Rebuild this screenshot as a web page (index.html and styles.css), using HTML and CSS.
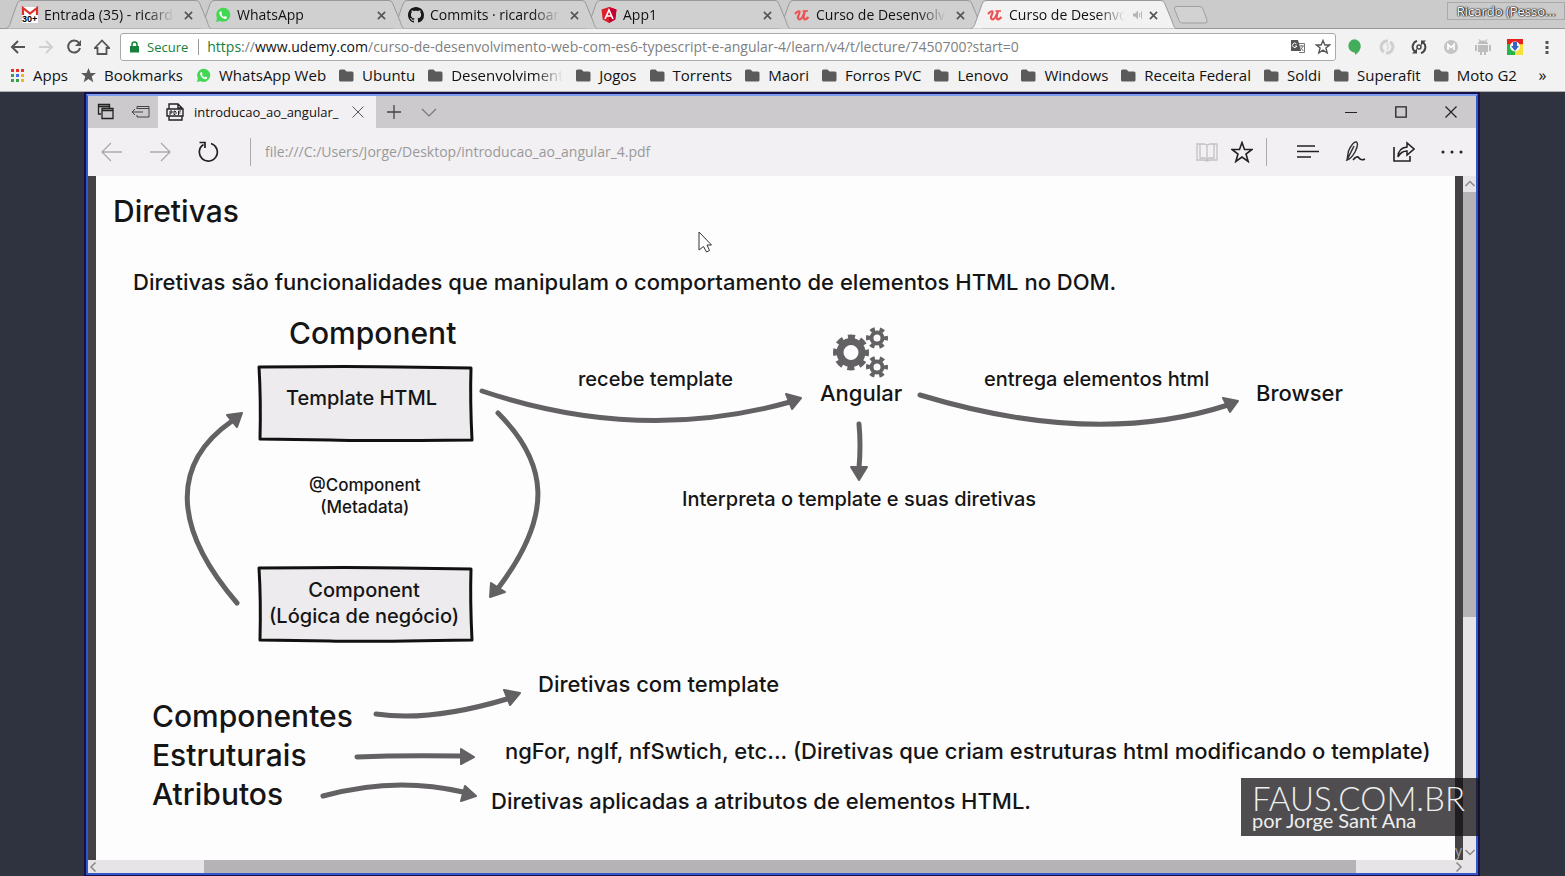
FILE: index.html
```html
<!DOCTYPE html>
<html lang="pt-BR">
<head>
<meta charset="utf-8">
<title>Curso de Desenvolvimento Web</title>
<link rel="stylesheet" href="styles.css">
</head>
<body>
<svg class="defs" aria-hidden="true">
  <symbol id="tab" viewBox="0 0 205 29" preserveAspectRatio="none"><path d="M0 28.5C3 28 4 24 5 21L11 4Q12 .5 15 .5H190Q193 .5 194 4L201 21C202 24 203 28 205 28.500"/></symbol>
  <symbol id="x" viewBox="0 0 10 10"><path d="M1 1L9 9M9 1L1 9" fill="none" stroke="#555" stroke-width="1.800"/></symbol>
  <symbol id="folder" viewBox="0 0 15 13"><path d="M0 2Q0 .5 1.500 .5H5.500L7.500 2.500H13Q14.500 2.500 14.500 4V11Q14.500 12.500 13 12.500H1.500Q0 12.500 0 11Z" fill="#5a5a5a"/></symbol>
  <symbol id="wa" viewBox="0 0 16 16"><path d="M1 15L2 11A7 7 0 1 1 5 14Z" fill="#43d854"/><path d="M5 4.500C3.500 6 5 8.500 6.500 10S10 12.500 11.500 11.500L12 10L10 9L9 10C8 9.500 6.800 8.500 6.300 7.300L7 6.400L6.300 4.400Z" fill="#fff"/></symbol>
  <symbol id="udemy" viewBox="0 0 16 16"><path d="M1 7Q4 3.500 5.500 4.500Q6 5.500 4.500 8.500T5.500 12.500Q8 12.500 11 4Q8.500 12 10.500 12.500Q12.500 12.500 14.500 10" fill="none" stroke="#ec5252" stroke-width="2.200"/><path d="M8.500 4H14" stroke="#ec5252" stroke-width="1.600"/></symbol>
</svg>

<header class="chrome">
  <nav class="tabs" aria-label="Abas">
    <div class="tab tab-1"><svg class="shape"><use href="#tab"/></svg>
      <svg class="fav" viewBox="0 0 16 16"><path d="M0 0H16V16H0Z" fill="#fff"/><path d="M1 8V1L8 6.500L15 1V8" fill="none" stroke="#dc3128" stroke-width="2.200"/><text x="0" y="15" class="badge">30+</text></svg>
      <span class="tab-title">Entrada (35) - ricardoar</span><button class="close" aria-label="Fechar"><svg><use href="#x"/></svg></button></div>
    <div class="tab tab-2"><svg class="shape"><use href="#tab"/></svg>
      <svg class="fav"><use href="#wa"/></svg>
      <span class="tab-title">WhatsApp</span><button class="close" aria-label="Fechar"><svg><use href="#x"/></svg></button></div>
    <div class="tab tab-3"><svg class="shape"><use href="#tab"/></svg>
      <svg class="fav" viewBox="0 0 16 16"><path fill="#191717" d="M8 0C3.580 0 0 3.580 0 8c0 3.540 2.290 6.530 5.470 7.590.4.070.55-.17.55-.38 0-.19-.01-.82-.01-1.490-2.010.37-2.530-.49-2.690-.94-.09-.23-.48-.94-.82-1.130-.28-.15-.68-.52-.01-.53.63-.01 1.080.58 1.230.82.72 1.210 1.870.87 2.330.66.070-.52.28-.87.51-1.070-1.780-.2-3.640-.89-3.640-3.950 0-.87.31-1.590.82-2.150-.08-.2-.36-1.020.08-2.120 0 0 .67-.21 2.200.82.64-.18 1.320-.27 2-.27s1.360.09 2 .27c1.530-1.040 2.200-.82 2.200-.82.44 1.100.16 1.920.08 2.120.51.56.82 1.270.82 2.150 0 3.070-1.870 3.750-3.650 3.950.29.25.54.73.54 1.480 0 1.070-.01 1.930-.01 2.200 0 .21.15.46.55.38A8.010 8.010 0 0 0 16 8c0-4.420-3.580-8-8-8z"/></svg>
      <span class="tab-title">Commits · ricardoarruda</span><button class="close" aria-label="Fechar"><svg><use href="#x"/></svg></button></div>
    <div class="tab tab-4"><svg class="shape"><use href="#tab"/></svg>
      <svg class="fav" viewBox="0 0 16 16"><path d="M8 0L15.500 2.600L14.300 12.500L8 16L1.700 12.500L.5 2.600Z" fill="#dd1f2d"/><path d="M8 0L15.500 2.600L14.300 12.500L8 16Z" fill="#c3002f"/><path d="M4 12L8 3L12 12M5.500 9H10.500" fill="none" stroke="#fff" stroke-width="1.600"/></svg>
      <span class="tab-title">App1</span><button class="close" aria-label="Fechar"><svg><use href="#x"/></svg></button></div>
    <div class="tab tab-5"><svg class="shape"><use href="#tab"/></svg>
      <svg class="fav"><use href="#udemy"/></svg>
      <span class="tab-title">Curso de Desenvolvimento</span><button class="close" aria-label="Fechar"><svg><use href="#x"/></svg></button></div>
    <div class="tab tab-active"><svg class="shape"><use href="#tab"/></svg>
      <svg class="fav"><use href="#udemy"/></svg>
      <span class="tab-title">Curso de Desenvolvimento</span>
      <svg class="sound" viewBox="0 0 10 10"><path d="M0 3.500H2L5 .5V9.500L2 6.500H0Z" fill="#b5b5b5"/><path d="M6.500 3V7M8.500 1.500V8.500" stroke="#b5b5b5" fill="none"/></svg>
      <button class="close" aria-label="Fechar"><svg><use href="#x"/></svg></button></div>
    <button class="new-tab" aria-label="Nova aba"><svg viewBox="0 0 36 18"><path d="M3 .5H27Q29 .5 30 3L34 14Q35 17 32 17H9Q7 17 6 14.500L1.500 3Q1 .5 3 .5Z" fill="#d2d2d2" stroke="#a0a0a0"/></svg></button>
    <button class="profile">Ricardo (Pesso...</button>
  </nav>

  <div class="toolbar">
    <button class="tool" aria-label="Voltar"><svg viewBox="0 0 16 16"><path d="M15 8H2M8 2L2 8L8 14" fill="none" stroke="#555" stroke-width="2"/></svg></button>
    <button class="tool" aria-label="Avançar"><svg viewBox="0 0 16 16"><path d="M1 8H14M8 2L14 8L8 14" fill="none" stroke="#d0d0d0" stroke-width="2"/></svg></button>
    <button class="tool" aria-label="Recarregar"><svg viewBox="0 0 16 16"><path d="M13 4A6 6 0 1 0 14 9" fill="none" stroke="#555" stroke-width="2"/><path d="M15 1V7H9Z" fill="#555"/></svg></button>
    <button class="tool" aria-label="Página inicial"><svg viewBox="0 0 16 16"><path d="M.8 9L8 1.500L15.200 9H12.500V15H3.500V9Z" fill="none" stroke="#555" stroke-width="1.800"/></svg></button>
    <div class="omnibox">
      <svg class="lock" viewBox="0 0 9 12"><path d="M2 6V3.500Q2 1 4.500 1T7 3.500V6" fill="none" stroke="#16803c" stroke-width="1.500"/><path d="M0 5H9V11.500H0Z" fill="#16803c"/></svg>
      <span class="secure">Secure</span>
      <div class="url" role="textbox" contenteditable="true" spellcheck="false" aria-label="Endereço"><span class="scheme">https</span>://<span class="host">www.udemy.com</span>/curso-de-desenvolvimento-web-com-es6-typescript-e-angular-4/learn/v4/t/lecture/7450700?start=0</div>
      <button class="mini" aria-label="Traduzir"><svg viewBox="0 0 16 16"><path d="M6 4.500H14.500V13.500H9" fill="#fff" stroke="#777"/><path d="M1 1H8L11 12H1Z" fill="#555"/><path d="M6.500 5A2.200 2.200 0 1 0 6.800 7H5" fill="none" stroke="#fff"/><path d="M9.500 7H14M11.700 6V7M13 7Q12 10 10 11M10.500 8.500L13.500 12" fill="none" stroke="#777"/></svg></button>
      <button class="mini" aria-label="Favorito"><svg viewBox="0 0 16 16"><path d="M8 1.500L9.900 6H14.500L10.900 9L12.200 14L8 11.200L3.800 14L5.100 9L1.500 6H6.100Z" fill="none" stroke="#555" stroke-width="1.400"/></svg></button>
    </div>
    <div class="extensions">
      <button class="tool" aria-label="Hangouts"><svg viewBox="0 0 16 16"><path d="M7 .2A6.800 6.800 0 0 1 13.800 7Q13.800 12 8 16V13.700A6.800 6.800 0 0 1 7 .2Z" fill="#42ad5b"/></svg></button>
      <button class="tool" aria-label="Extensão"><svg viewBox="0 0 16 16"><path d="M9 2A6 6 0 0 0 5 13M7 14A6 6 0 0 0 11 3" fill="none" stroke="#cfcfcf" stroke-width="3"/><path d="M7 5Q11 6 8 11" fill="none" stroke="#ddd" stroke-width="2"/></svg></button>
      <button class="tool" aria-label="Sincronizar"><svg viewBox="0 0 16 16"><path d="M6 1.900A6.300 6.300 0 0 0 4 12.800M10 14.100A6.300 6.300 0 0 0 12 3.200" fill="none" stroke="#444" stroke-width="2"/><path d="M1 14.500H6V9.500ZM15 1.500H10V6.500Z" fill="#444"/><circle cx="8" cy="8" r="2" fill="none" stroke="#444" stroke-width="1.500"/></svg></button>
      <button class="tool" aria-label="Mega"><svg viewBox="0 0 16 16"><circle cx="8" cy="8" r="7" fill="#c4c4c4"/><path d="M5 11V5.500L8 8.500L11 5.500V11" fill="none" stroke="#fff" stroke-width="1.700"/></svg></button>
      <button class="tool" aria-label="Android"><svg viewBox="0 0 16 16"><path d="M3 6H13V13H11V16H9V13H7V16H5V13H3ZM0 6H2V12H0ZM14 6H16V12H14ZM3 5Q3 1.500 8 1.500T13 5ZM4 0L6 2L5 3L3.500 .5ZM12 0L10 2L11 3L12.500 .5Z" fill="#bdbdbd"/></svg></button>
      <button class="tool" aria-label="Downloads"><svg viewBox="0 0 16 16"><path d="M0 0H16V6H0Z" fill="#e5221d"/><path d="M16 5V16H8V6Z" fill="#f8e13a"/><path d="M0 5L8 6V16H0Z" fill="#28b446"/><circle cx="8" cy="7.500" r="5" fill="#fff"/><path d="M6 3H10V7H12L8 12L4 7H6Z" fill="#3565c4"/></svg></button>
      <button class="tool" aria-label="Menu"><svg viewBox="0 0 16 16"><path d="M6.500 2H9.500V5H6.500ZM6.500 7H9.500V10H6.500ZM6.500 12H9.500V15H6.500Z" fill="#555"/></svg></button>
    </div>
  </div>

  <nav class="bookmarks" aria-label="Favoritos">
    <a href="#"><svg viewBox="0 0 15 15"><path d="M1 1H4V4H1ZM6 1H9V4H6ZM11 1H14V4H11Z" fill="#e8312a"/><path d="M1 6H4V9H1ZM1 11H4V14H1ZM6 11H9V14H6Z" fill="#3b9d4a"/><path d="M6 6H9V9H6Z" fill="#4a6df0"/><path d="M11 6H14V9H11ZM11 11H14V14H11Z" fill="#f0b429"/></svg>Apps</a>
    <a href="#"><svg viewBox="0 0 15 15"><path d="M7.500 0L9.500 5H15L10.700 8.500L12.300 14.300L7.500 11L2.700 14.300L4.300 8.500L0 5H5.500Z" fill="#5a5a5a"/></svg>Bookmarks</a>
    <a href="#"><svg><use href="#wa"/></svg>WhatsApp Web</a>
    <a href="#"><svg><use href="#folder"/></svg>Ubuntu</a>
    <a href="#"><svg><use href="#folder"/></svg><span class="cut">Desenvolvimento</span></a>
    <a href="#"><svg><use href="#folder"/></svg>Jogos</a>
    <a href="#"><svg><use href="#folder"/></svg>Torrents</a>
    <a href="#"><svg><use href="#folder"/></svg>Maori</a>
    <a href="#"><svg><use href="#folder"/></svg>Forros PVC</a>
    <a href="#"><svg><use href="#folder"/></svg>Lenovo</a>
    <a href="#"><svg><use href="#folder"/></svg>Windows</a>
    <a href="#"><svg><use href="#folder"/></svg>Receita Federal</a>
    <a href="#"><svg><use href="#folder"/></svg>Soldi</a>
    <a href="#"><svg><use href="#folder"/></svg>Superafit</a>
    <a href="#"><svg><use href="#folder"/></svg>Moto G2</a>
    <button class="more" aria-label="Mais favoritos">»</button>
  </nav>
</header>

<main class="video">
  <section class="edge">
    <div class="edge-tabs">
      <button class="ebtn" aria-label="Guias separadas"><svg viewBox="0 0 18 18"><path d="M4 11H1.500V1.500H12.500V5M1.500 3.500H12.500M5 5.500H16V15.500H5ZM5 7.500H16" fill="none" stroke="#222" stroke-width="1.300"/></svg></button>
      <button class="ebtn" aria-label="Separar guias"><svg viewBox="0 0 18 18"><path d="M5 6V3.500H17V14H5V12M5 5.500H17M0 9H11M3 6L0 9L3 12" fill="none" stroke="#444"/></svg></button>
      <div class="etab">
        <svg viewBox="0 0 18 18"><path d="M3 6V1H12L16 5V6M12 1V5H16M3 13V17H16V13" fill="none" stroke="#222" stroke-width="1.400"/><path d="M1 6H17V13H1Z" fill="#f2f0f3" stroke="#222" stroke-width="1.400"/><path d="M4 12V8H6V10H4M8 8V11.500H9L10 10.500V9L9 8ZM12.500 12V8H15M12.500 10H14.500" fill="none" stroke="#222"/></svg>
        <span class="etitle">introducao_ao_angular_</span>
        <button aria-label="Fechar guia"><svg class="small" viewBox="0 0 12 12"><path d="M.5 .5L11.500 11.500M11.500 .5L.5 11.500" stroke="#555" fill="none"/></svg></button>
      </div>
      <button class="ebtn" aria-label="Nova guia"><svg viewBox="0 0 18 18"><path d="M9 2V16M2 9H16" stroke="#444" stroke-width="1.300"/></svg></button>
      <button class="ebtn" aria-label="Visualizações"><svg viewBox="0 0 18 18"><path d="M2 6L9 13L16 6" fill="none" stroke="#777" stroke-width="1.200"/></svg></button>
      <div class="winbtns">
        <button aria-label="Minimizar"><svg class="small" viewBox="0 0 12 12"><path d="M0 6.500H12" stroke="#222"/></svg></button>
        <button aria-label="Maximizar"><svg class="small" viewBox="0 0 12 12"><path d="M.8 .8H11.200V11.200H.8Z" fill="none" stroke="#222" stroke-width="1.300"/></svg></button>
        <button aria-label="Fechar"><svg class="small" viewBox="0 0 12 12"><path d="M.5 .5L11.500 11.500M11.500 .5L.5 11.500" stroke="#222" fill="none" stroke-width="1.200"/></svg></button>
      </div>
    </div>
    <div class="edge-bar">
      <button class="nav" aria-label="Voltar"><svg viewBox="0 0 22 22"><path d="M1 11H21M10 2L1 11L10 20" fill="none" stroke="#aaa" stroke-width="1.300"/></svg></button>
      <button class="nav" aria-label="Avançar"><svg viewBox="0 0 22 22"><path d="M1 11H21M12 2L21 11L12 20" fill="none" stroke="#aaa" stroke-width="1.300"/></svg></button>
      <button class="nav" aria-label="Atualizar"><svg viewBox="0 0 22 22"><path d="M6.500 3.500A9 9 0 1 0 14 2.500" fill="none" stroke="#222" stroke-width="1.700"/><path d="M2.500 1.500H8V7" fill="none" stroke="#222" stroke-width="1.700"/></svg></button>
      <span class="rule"></span>
      <input class="eurl" aria-label="Endereço do documento" value="file:///C:/Users/Jorge/Desktop/introducao_ao_angular_4.pdf">
      <button aria-label="Modo de leitura"><svg viewBox="0 0 22 22"><path d="M1 3H8L11 4L14 3H21V19H14L11 20L8 19H1ZM11 4V20M4 3V17H9L11 19L13 17H18V3" fill="none" stroke="#c2c0c3" stroke-width="1.300"/></svg></button>
      <button class="star" aria-label="Favoritos"><svg viewBox="0 0 22 22"><path d="M11 1.500L13.500 8.500H21L15 13L17.200 20.500L11 16L4.800 20.500L7 13L1 8.500H8.500Z" fill="none" stroke="#222" stroke-width="1.600"/></svg></button>
      <span class="rule"></span>
      <button class="act" aria-label="Hub"><svg viewBox="0 0 22 22"><path d="M0 5H18M0 10.500H22M0 16H14" stroke="#222" stroke-width="1.500"/></svg></button>
      <button class="act" aria-label="Anotar"><svg viewBox="0 0 22 22"><path d="M2 19L3.500 10Q8 0 11.500 1Q14 3 10 11Q6 18 2 19L9 5" fill="none" stroke="#333" stroke-width="1.500"/><path d="M8 19Q12 14 14 17T20 18" fill="none" stroke="#222" stroke-width="1.500"/></svg></button>
      <button class="act" aria-label="Compartilhar"><svg viewBox="0 0 22 22"><path d="M1 6V20H17V15" fill="none" stroke="#222" stroke-width="1.600"/><path d="M5 16Q5 7 14 6V2L21 8L14 14V10Q8 10 5 16Z" fill="none" stroke="#222" stroke-width="1.500"/></svg></button>
      <button class="act" aria-label="Mais"><svg viewBox="0 0 22 22"><g fill="#222"><circle cx="2" cy="11" r="1.500"/><circle cx="11" cy="11" r="1.500"/><circle cx="20" cy="11" r="1.500"/></g></svg></button>
    </div>

    <div class="viewer">
      <article class="slide">
        <svg class="art" viewBox="96 176 1359 684" aria-hidden="true">
          <g fill="#edebed" stroke="#111" stroke-width="3" stroke-linejoin="round">
            <path d="M259 367Q360 366 400 367L471 368Q470 400 472 440Q360 441 330 440L260 439Q261 400 259 367Z"/>
            <path d="M259 568Q360 567 400 568L471 569Q470 600 472 640Q360 642 330 641L260 640Q261 600 259 568Z"/>
          </g>
          <g fill="none" stroke="#636163" stroke-width="5" stroke-linecap="round">
            <path d="M482 391Q640 444 790 402"/>
            <path d="M920 395Q1095 448 1228 405"/>
            <path d="M859 424Q861 445 859 468"/>
            <path d="M237 603C170 525 173 462 232 421"/>
            <path d="M498 413C548 463 554 514 499 587"/>
            <path d="M376 714Q430 722 507 699"/>
            <path d="M357 757Q400 755 462 756"/>
            <path d="M323 796Q395 776 463 792"/>
          </g>
          <g fill="#636163" stroke="#636163" stroke-width="2" stroke-linejoin="round">
            <path d="M786 394L801 398L792 409Z"/>
            <path d="M1223 398L1238 401L1230 412Z"/>
            <path d="M851 467L867 467L859 480Z"/>
            <path d="M227 415L242 413L237 427Z"/>
            <path d="M491 583L505 592L490 597Z"/>
            <path d="M504 690L520 693L510 705Z"/>
            <path d="M461 749L474 757L461 764Z"/>
            <path d="M465 786L476 796L461 801Z"/>
          </g>
          <g fill="none" stroke="#636163">
            <circle cx="851" cy="352.500" r="11" stroke-width="7"/>
            <circle cx="851" cy="352.500" r="15.500" stroke-width="5" stroke-dasharray="7 5.173" stroke-dashoffset="3.500"/>
            <circle cx="877" cy="338" r="5.500" stroke-width="4"/>
            <circle cx="877" cy="338" r="9" stroke-width="4" stroke-dasharray="4.600 4.824" stroke-dashoffset="2.300"/>
            <circle cx="877" cy="367" r="5.500" stroke-width="4"/>
            <circle cx="877" cy="367" r="9" stroke-width="4" stroke-dasharray="4.600 4.824" stroke-dashoffset="2.300"/>
          </g>
          <path d="M699 232V250L703.500 246.500L706.500 252L709.500 250.500L707 245H711.500Z" fill="#fff" stroke="#333"/>
        </svg>
        <h1 class="label xl p-title">Diretivas</h1>
        <p class="label lg p-sub">Diretivas são funcionalidades que manipulam o comportamento de elementos HTML no DOM.</p>
        <h2 class="label xl p-component">Component</h2>
        <p class="label md p-template">Template HTML</p>
        <p class="label sm p-meta">@Component<br>(Metadata)</p>
        <p class="label md p-logic">Component<br>(Lógica de negócio)</p>
        <p class="label md p-recebe">recebe template</p>
        <p class="label lg p-angular">Angular</p>
        <p class="label md p-entrega">entrega elementos html</p>
        <p class="label lg p-browser">Browser</p>
        <p class="label md p-interp">Interpreta o template e suas diretivas</p>
        <ul class="label xl p-kinds"><li>Componentes</li><li>Estruturais</li><li>Atributos</li></ul>
        <p class="label lg p-k1">Diretivas com template</p>
        <p class="label lg p-k2">ngFor, ngIf, nfSwtich, etc... (Diretivas que criam estruturas html modificando o template)</p>
        <p class="label lg p-k3">Diretivas aplicadas a atributos de elementos HTML.</p>
      </article>
      <div class="vbar">
        <svg viewBox="0 0 8 8"><path d="M1 6L4 3L7 6" fill="none" stroke="#888"/></svg>
        <span class="vtrack"><span class="vthumb"></span></span>
        <svg viewBox="0 0 8 8"><path d="M1 2L4 5L7 2" fill="none" stroke="#888"/></svg>
      </div>
    </div>
    <div class="hbar">
      <svg viewBox="0 0 8 8"><path d="M5 1L2 4L5 7" fill="none" stroke="#888"/></svg>
      <span class="htrack"><span class="hthumb"></span></span>
      <svg viewBox="0 0 8 8"><path d="M3 1L6 4L3 7" fill="none" stroke="#888"/></svg>
    </div>
    <div class="watermark"><strong>FAUS.COM.BR</strong><span>por Jorge Sant Ana</span></div>
    <span class="corner-mark">y</span>
  </section>
</main>
</body>
</html>
```
FILE: styles.css
```css
* { box-sizing: border-box; }
body {
  margin: 0;
  height: 100vh;
  display: flex;
  flex-direction: column;
  overflow: hidden;
  background: #2f333f;
  color: #111;
  font: 15px/20px "Open Sans", "Noto Sans", sans-serif;
}
button { border: 0; padding: 0; background: none; font: inherit; color: inherit; display: flex; align-items: center; justify-content: center; }
a { color: inherit; text-decoration: none; }
svg { display: block; flex: none; }
.defs { position: absolute; width: 0; height: 0; }

/* Browser chrome */
.chrome { background: #f2f2f2; border-bottom: 1px solid #b0b0b0; }
.tabs {
  display: flex;
  height: 29px;
  padding-left: 6px;
  background: #cbcbcb;
  border-bottom: 1px solid #999;
}
.tab {
  position: relative;
  flex: 0 1 193px;
  min-width: 0;
  height: 29px;
  display: flex;
  align-items: center;
  padding: 1px 5px 0 16px;
  font-size: 14px;
}
.tab-1 { z-index: 5; }
.tab-2 { z-index: 4; }
.tab-3 { z-index: 3; }
.tab-4 { z-index: 2; }
.tab-5 { z-index: 1; }
.tab-active { z-index: 6; }
.shape { position: absolute; left: 0; top: 0; width: calc(100% + 12px); height: 29px; fill: #d0d0d0; stroke: #999; }
.tab-active .shape { fill: #f2f2f2; }
.fav { position: relative; width: 16px; height: 16px; margin-right: 6px; overflow: visible; }
.badge { font: bold 9px "Liberation Sans", sans-serif; fill: #000; }
.tab-title {
  position: relative;
  flex: 1;
  min-width: 0;
  margin-right: 8px;
  overflow: hidden;
  white-space: nowrap;
  -webkit-mask-image: linear-gradient(90deg, #000 calc(100% - 28px), transparent);
  mask-image: linear-gradient(90deg, #000 calc(100% - 28px), transparent);
}
.sound { position: relative; width: 10px; height: 10px; margin-right: 4px; }
.close { position: relative; width: 12px; height: 16px; }
.close svg { width: 9px; height: 9px; }
.new-tab { margin: 6px 0 0 9px; width: 36px; height: 18px; }
.new-tab svg { width: 36px; height: 18px; }
.profile {
  align-self: flex-start;
  margin: 2px 0 0 auto;
  width: 118px;
  height: 18px;
  border: 1px solid #aaa;
  font-size: 13px;
  color: #fff;
  text-shadow: 0 0 1px #000, 0 0 2px #000, 1px 0 1px #333;
}

.toolbar { display: flex; align-items: center; height: 36px; padding: 0 10px; gap: 12px; }
.tool { width: 16px; height: 16px; }
.tool svg { width: 16px; height: 16px; }
.omnibox {
  flex: 1;
  min-width: 0;
  height: 28px;
  margin: 0 -2px 0 -2px;
  padding: 0 4px 0 9px;
  display: flex;
  align-items: center;
  background: #fff;
  border: 1px solid #aaa;
  border-radius: 3px;
}
.lock { width: 9px; height: 12px; margin-right: 8px; }
.secure { color: #16803c; padding-right: 10px; border-right: 1px solid #999; margin-right: 8px; line-height: 16px; font-size: 13px; }
.url { flex: 1; min-width: 0; overflow: hidden; white-space: nowrap; color: #808080; font-size: 14px; outline: 0; }
.scheme { color: #16803c; }
.host { color: #111; }
.mini { margin-left: 9px; }
.mini svg { width: 16px; height: 16px; }
.extensions { display: flex; gap: 16px; padding-left: 1px; }

.bookmarks { display: flex; align-items: center; height: 26px; padding: 0 10px 6px; }
.bookmarks a { display: flex; align-items: center; gap: 8px; margin-right: 13px; white-space: nowrap; }
.bookmarks svg { width: 15px; height: 15px; }
.cut { width: 112px; overflow: hidden; -webkit-mask-image: linear-gradient(90deg, #000 75%, transparent); mask-image: linear-gradient(90deg, #000 75%, transparent); }
.more { margin: 0 auto; font-size: 16px; }

/* Recorded desktop window */
.video { flex: 1; min-height: 0; display: flex; padding: 2px 87px 1px 86px; }
.edge {
  position: relative;
  flex: 1;
  min-width: 0;
  display: flex;
  flex-direction: column;
  border: 2px solid #3558c8;
  border-top-color: #7b9af0;
  outline: 2px solid #15104a;
  background: #f2f0f3;
  font-size: 14px;
}
.edge-tabs { display: flex; height: 32px; background: #cccacc; }
.ebtn { width: 35px; }
.ebtn svg { width: 18px; height: 18px; }
.etab { width: 218px; display: flex; align-items: center; padding: 0 12px 0 8px; background: #f2f0f3; }
.etab svg { width: 18px; height: 18px; }
.etitle { flex: 1; margin-left: 10px; font-size: 13px; }
.edge .small { width: 12px; height: 12px; }
.winbtns { display: flex; margin-left: auto; }
.winbtns button { width: 50px; }
.edge-bar { display: flex; align-items: center; height: 48px; padding: 0 13px; }
.edge-bar svg { width: 22px; height: 22px; }
.nav { margin-right: 26px; }
.rule { width: 1px; height: 28px; background: #aaa; }
.nav + .rule { margin-left: 5px; }
.eurl { flex: 1; min-width: 0; margin-left: 14px; padding: 0; border: 0; background: none; color: #999; font: inherit; outline: 0; }
.star { margin: 0 13px; }
.act { margin-left: 26px; }
.star + .rule + .act { margin-left: 30px; }

.viewer { flex: 1; min-height: 0; display: flex; }
.slide {
  position: relative;
  flex: 1;
  min-width: 0;
  overflow: hidden;
  background: #fefdfe;
  border-left: 8px solid #444244;
  border-right: 8px solid #444244;
}
.art { position: absolute; left: 0; top: 0; width: 1359px; height: 684px; }
.vbar { width: 13px; display: flex; flex-direction: column; align-items: center; justify-content: space-between; background: #e6e4e6; }
.vbar svg, .hbar svg { width: 12px; height: 14px; }
.vtrack { flex: 1; width: 100%; padding-top: 2px; }
.vthumb { display: block; height: 65%; background: #b5b3b5; }
.hbar { height: 13px; display: flex; align-items: center; background: #e6e4e6; padding-right: 12px; }
.htrack { flex: 1; height: 100%; padding: 0 7% 0 104px; }
.hthumb { display: block; height: 100%; background: #b5b3b5; }

/* Diagram labels */
.label { position: absolute; margin: 0; padding: 0; list-style: none; white-space: nowrap; font-family: Inter, "Open Sans", sans-serif; font-weight: 500; color: #151515; text-align: center; }
.xl { font-size: 30px; line-height: 39px; }
.lg { font-size: 22px; line-height: 26px; }
.md { font-size: 20px; line-height: 26px; }
.sm { font-size: 17px; line-height: 22px; }
.p-title { left: 17px; top: 16px; }
.p-sub { left: 37px; top: 93px; }
.p-component { left: 193px; top: 138px; }
.p-template { left: 190px; top: 209px; }
.p-meta { left: 213px; top: 298px; }
.p-logic { left: 173px; top: 401px; }
.p-recebe { left: 482px; top: 190px; }
.p-angular { left: 724px; top: 204px; }
.p-entrega { left: 888px; top: 190px; }
.p-browser { left: 1160px; top: 204px; }
.p-interp { left: 586px; top: 310px; }
.p-kinds { left: 56px; top: 521px; text-align: left; }
.p-k1 { left: 442px; top: 495px; }
.p-k2 { left: 409px; top: 562px; }
.p-k3 { left: 395px; top: 612px; }

.watermark {
  position: absolute;
  right: -3px;
  bottom: 37px;
  width: 238px;
  height: 58px;
  padding: 6px 11px;
  display: flex;
  flex-direction: column;
  background: rgba(20, 18, 20, .75);
  color: #eee;
  font-family: Lato, sans-serif;
  white-space: nowrap;
}
.watermark strong { font-size: 33px; font-weight: 300; line-height: 28px; }
.watermark span { font-size: 20px; line-height: 16px; }
.corner-mark { position: absolute; right: 14px; bottom: 13px; color: #aaa; line-height: 18px; }
```
